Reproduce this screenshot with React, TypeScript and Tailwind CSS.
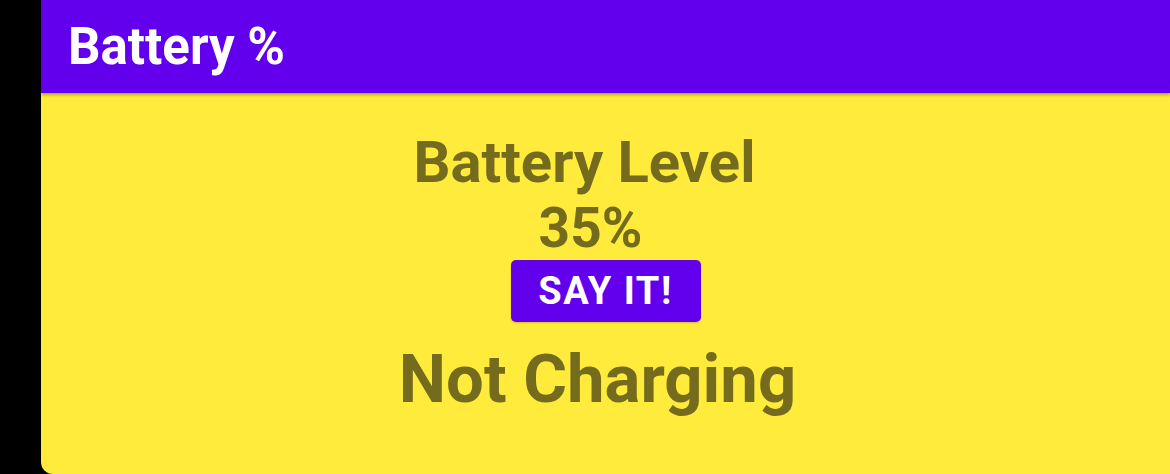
export default function App() {
  return (
    <div className="flex h-[474px] w-[1170px] overflow-hidden bg-black font-['Roboto',sans-serif]">
      <div className="w-[41px] shrink-0" />
      <div className="flex flex-1 flex-col overflow-hidden rounded-bl-[12px] bg-[#FFEB3B]">
        <header className="z-10 flex h-[93px] shrink-0 items-center bg-[#6200EE] pl-[27px] shadow-[0_2px_3px_rgba(0,0,0,0.3)]">
          <h1 className="text-[51px] leading-none font-bold text-white">Battery %</h1>
        </header>
        <main className="flex flex-col items-center text-[#756B1D]">
          <p className="mt-[40px] pr-[42px] text-[58px] leading-none font-bold">Battery Level</p>
          <p className="mt-[10px] pr-[30px] text-[55px] leading-none font-bold">35%</p>
          <button className="mt-[4px] flex h-[62px] w-[190px] items-center justify-center rounded-[5px] bg-[#6200EE] text-[38px] font-bold tracking-[1.5px] text-white uppercase shadow-[0_1px_2px_rgba(0,0,0,0.2)]">
            Say it!
          </button>
          <p className="mt-[24px] pr-[16px] text-[67px] leading-none font-bold">Not Charging</p>
        </main>
      </div>
    </div>
  );
}
